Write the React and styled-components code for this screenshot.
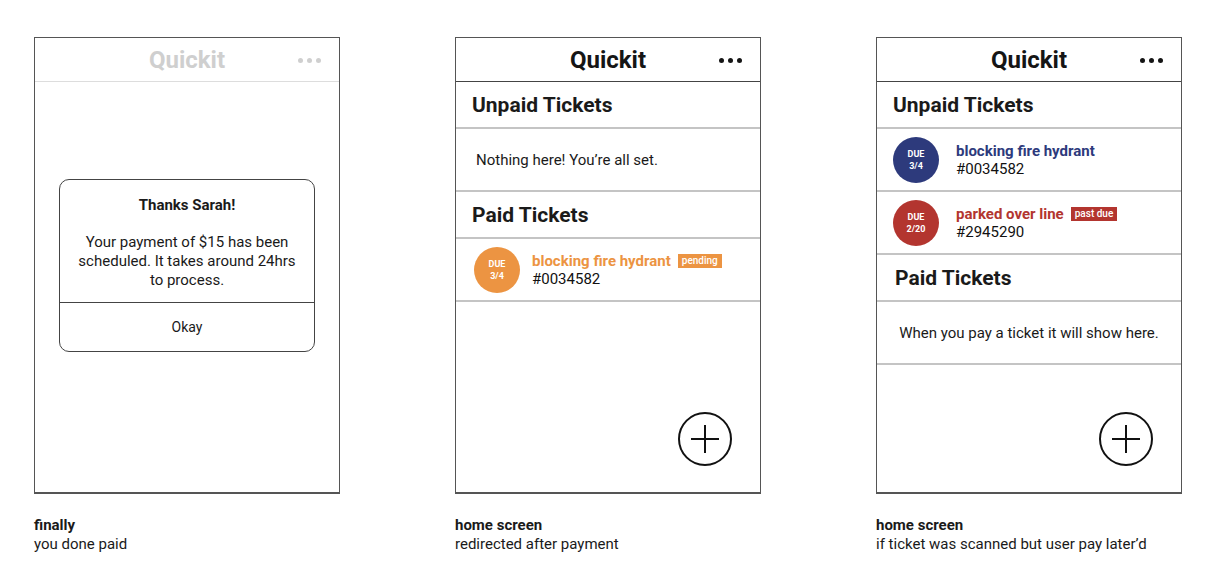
import React from 'react';
import styled, { createGlobalStyle } from 'styled-components';

const GlobalStyle = createGlobalStyle`
  body {
    margin: 0;
    background: #fff;
    font-family: Roboto, "Liberation Sans", sans-serif;
    color: #1a1a1a;
  }
`;

const Page = styled.div`
  display: flex;
  gap: 115px;
  padding: 37px 0 0 34px;
`;

const Column = styled.div`
  display: flex;
  flex-direction: column;
  width: 306px;
`;

const Phone = styled.div`
  position: relative;
  height: 457px;
  box-sizing: border-box;
  border: 1px solid #555;
  border-bottom-width: 2px;
  display: flex;
  flex-direction: column;
`;

const Header = styled.div`
  height: 43px;
  flex-shrink: 0;
  display: flex;
  align-items: center;
  justify-content: center;
  position: relative;
  border-bottom: 1px solid ${p => (p.faded ? '#ddd' : '#444')};
  font-size: 24px;
  font-weight: 700;
  color: ${p => (p.faded ? '#cfcfcf' : '#151515')};
`;

const Dots = styled.div`
  position: absolute;
  right: 18px;
  top: 20px;
  display: flex;
  gap: 4px;
  span {
    width: 5px;
    height: 5px;
    border-radius: 50%;
    background: ${p => (p.faded ? '#cfcfcf' : '#151515')};
  }
`;

const SectionTitle = styled.div`
  height: 45px;
  flex-shrink: 0;
  display: flex;
  align-items: center;
  padding-left: ${p => p.indent || 16}px;
  font-size: 21px;
  font-weight: 700;
  border-bottom: 2px solid #c4c4c4;
`;

const Empty = styled.div`
  height: 61px;
  flex-shrink: 0;
  display: flex;
  align-items: center;
  justify-content: ${p => (p.center ? 'center' : 'flex-start')};
  padding-left: ${p => (p.center ? 0 : 20)}px;
  font-size: 15px;
  border-bottom: 2px solid #c4c4c4;
`;

const TicketRow = styled.div`
  height: 61px;
  flex-shrink: 0;
  display: flex;
  align-items: center;
  padding-left: ${p => p.indent || 18}px;
  gap: ${p => p.gap || 12}px;
  border-bottom: 2px solid #c4c4c4;
`;

const Badge = styled.div`
  width: 46px;
  height: 46px;
  border-radius: 50%;
  background: ${p => p.color};
  color: #fff;
  font-size: 9px;
  font-weight: 700;
  line-height: 12px;
  display: flex;
  flex-direction: column;
  align-items: center;
  justify-content: center;
`;

const TicketInfo = styled.div`
  display: flex;
  flex-direction: column;
`;

const TicketName = styled.div`
  display: flex;
  align-items: center;
  gap: 7px;
  font-size: 15px;
  font-weight: 700;
  color: ${p => p.color};
  line-height: 18px;
`;

const Tag = styled.span`
  background: ${p => p.color};
  color: #fff;
  font-size: 10px;
  font-weight: 500;
  padding: 1px 4px;
  line-height: 12px;
`;

const TicketNo = styled.div`
  font-size: 15px;
  line-height: 18px;
  color: #111;
`;

const AddButton = styled.div`
  position: absolute;
  right: 28px;
  bottom: 26px;
  width: 54px;
  height: 54px;
`;

const Dialog = styled.div`
  margin: 97px 24px 0 24px;
  border: 1px solid #444;
  border-radius: 10px;
  display: flex;
  flex-direction: column;
`;

const DialogBody = styled.div`
  padding: 16px 10px 12px;
  text-align: center;
  font-size: 15px;
  line-height: 19px;
  border-bottom: 1px solid #444;
  h4 {
    margin: 0 0 18px;
    font-size: 15px;
    font-weight: 700;
  }
  p {
    margin: 0;
  }
`;

const DialogAction = styled.div`
  height: 48px;
  display: flex;
  align-items: center;
  justify-content: center;
  font-size: 14px;
`;

const Caption = styled.div`
  margin-top: 22px;
  font-size: 15px;
  line-height: 19px;
  b {
    display: block;
    font-weight: 700;
  }
`;

const PlusIcon = () => (
  <AddButton>
    <svg width="54" height="54" viewBox="0 0 54 54">
      <circle cx="27" cy="27" r="26" fill="none" stroke="#111" strokeWidth="2" />
      <line x1="13" y1="27" x2="41" y2="27" stroke="#111" strokeWidth="2" />
      <line x1="27" y1="13" x2="27" y2="41" stroke="#111" strokeWidth="2" />
    </svg>
  </AddButton>
);

const TopBar = ({ faded }) => (
  <Header faded={faded}>
    Quickit
    <Dots faded={faded}>
      <span />
      <span />
      <span />
    </Dots>
  </Header>
);

const Ticket = ({ color, date, name, id, tag, indent, gap }) => (
  <TicketRow indent={indent} gap={gap}>
    <Badge color={color}>
      <span>DUE</span>
      <span>{date}</span>
    </Badge>
    <TicketInfo>
      <TicketName color={color}>
        {name}
        {tag && <Tag color={color}>{tag}</Tag>}
      </TicketName>
      <TicketNo>{id}</TicketNo>
    </TicketInfo>
  </TicketRow>
);

export default function App() {
  return (
    <Page>
      <GlobalStyle />
      <Column>
        <Phone>
          <TopBar faded />
          <Dialog>
            <DialogBody>
              <h4>Thanks Sarah!</h4>
              <p>Your payment of $15 has been scheduled. It takes around 24hrs to process.</p>
            </DialogBody>
            <DialogAction>Okay</DialogAction>
          </Dialog>
        </Phone>
        <Caption>
          <b>finally</b>
          you done paid
        </Caption>
      </Column>

      <Column>
        <Phone>
          <TopBar />
          <SectionTitle>Unpaid Tickets</SectionTitle>
          <Empty>Nothing here! You’re all set.</Empty>
          <SectionTitle>Paid Tickets</SectionTitle>
          <Ticket color="#EC9442" date="3/4" name="blocking fire hydrant" id="#0034582" tag="pending" />
          <PlusIcon />
        </Phone>
        <Caption>
          <b>home screen</b>
          redirected after payment
        </Caption>
      </Column>

      <Column>
        <Phone>
          <TopBar />
          <SectionTitle>Unpaid Tickets</SectionTitle>
          <Ticket indent={16} gap={17} color="#2D3A7C" date="3/4" name="blocking fire hydrant" id="#0034582" />
          <Ticket indent={16} gap={17} color="#B3352F" date="2/20" name="parked over line" id="#2945290" tag="past due" />
          <SectionTitle indent={18}>Paid Tickets</SectionTitle>
          <Empty center>When you pay a ticket it will show here.</Empty>
          <PlusIcon />
        </Phone>
        <Caption>
          <b>home screen</b>
          if ticket was scanned but user pay later’d
        </Caption>
      </Column>
    </Page>
  );
}
